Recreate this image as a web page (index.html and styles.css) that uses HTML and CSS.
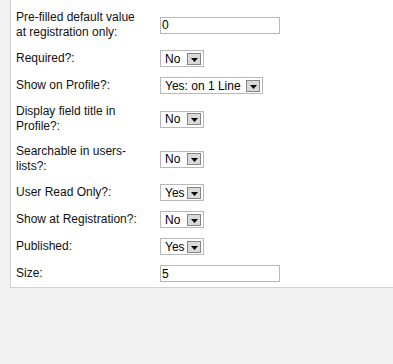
FILE: index.html
```html
<!DOCTYPE html>
<html lang="en">
<head>
<meta charset="UTF-8">
<title>Field Parameters</title>
<link rel="stylesheet" href="styles.css">
</head>
<body>
<div class="panel">
<table class="params">
<tr>
<td class="lbl">Pre-filled default value at registration only:</td>
<td><input type="text" class="txt" value="0"></td>
</tr>
<tr>
<td class="lbl">Required?:</td>
<td><span class="pick sm"><select><option>No</option><option>Yes</option></select><i class="drop"><svg width="7" height="4" viewBox="0 0 7 4"><path d="M0 0h7L3.5 4z" fill="#000"/></svg></i></span></td>
</tr>
<tr>
<td class="lbl">Show on Profile?:</td>
<td><span class="pick lg"><select><option>Yes: on 1 Line</option><option>Yes: on 2 Lines</option><option>No</option></select><i class="drop"><svg width="7" height="4" viewBox="0 0 7 4"><path d="M0 0h7L3.5 4z" fill="#000"/></svg></i></span></td>
</tr>
<tr>
<td class="lbl">Display field title in Profile?:</td>
<td><span class="pick sm"><select><option>No</option><option>Yes</option></select><i class="drop"><svg width="7" height="4" viewBox="0 0 7 4"><path d="M0 0h7L3.5 4z" fill="#000"/></svg></i></span></td>
</tr>
<tr>
<td class="lbl">Searchable in users-lists?:</td>
<td><span class="pick sm"><select><option>No</option><option>Yes</option></select><i class="drop"><svg width="7" height="4" viewBox="0 0 7 4"><path d="M0 0h7L3.5 4z" fill="#000"/></svg></i></span></td>
</tr>
<tr>
<td class="lbl">User Read Only?:</td>
<td><span class="pick sm"><select><option>Yes</option><option>No</option></select><i class="drop"><svg width="7" height="4" viewBox="0 0 7 4"><path d="M0 0h7L3.5 4z" fill="#000"/></svg></i></span></td>
</tr>
<tr>
<td class="lbl">Show at Registration?:</td>
<td><span class="pick sm"><select><option>No</option><option>Yes</option></select><i class="drop"><svg width="7" height="4" viewBox="0 0 7 4"><path d="M0 0h7L3.5 4z" fill="#000"/></svg></i></span></td>
</tr>
<tr>
<td class="lbl">Published:</td>
<td><span class="pick sm"><select><option>Yes</option><option>No</option></select><i class="drop"><svg width="7" height="4" viewBox="0 0 7 4"><path d="M0 0h7L3.5 4z" fill="#000"/></svg></i></span></td>
</tr>
<tr>
<td class="lbl">Size:</td>
<td><input type="text" class="txt" value="5"></td>
</tr>
</table>
</div>
</body>
</html>
```
FILE: styles.css
```css
html, body { margin: 0; padding: 0; background: #f2f2f2; }
body { font-family: 'Liberation Sans', Arial, sans-serif; font-size: 12px; color: #111; }
.panel { margin-left: 10px; padding-top: 5px; background: #fff; border-left: 1px solid #d0d0d0; border-bottom: 1px solid #d0d0d0; }
.params { border-collapse: collapse; border-spacing: 0; margin-left: 5px; }
.params td { padding: 5px 0; vertical-align: middle; line-height: 15px; }
.params td.lbl { width: 125px; padding-right: 19px; }
.txt { box-sizing: border-box; width: 120px; height: 17px; border: 1px solid #b8b8b8; padding: 0 1px; margin: 0; font-family: 'Liberation Sans', Arial, sans-serif; font-size: 12px; color: #000; display: block; }
.pick { display: flex; align-items: center; width: max-content; height: 17px; box-sizing: border-box; border: 1px solid #b8b8b8; background: #fff; }
.pick select { appearance: none; -webkit-appearance: none; border: 0; margin: 0; padding: 0 0 0 4px; height: 15px; background: transparent; font-family: 'Liberation Sans', Arial, sans-serif; font-size: 12px; color: #000; outline: none; }
.pick.sm select { width: 26px; }
.pick.lg select { width: 85px; }
.drop { display: flex; align-items: flex-end; justify-content: center; box-sizing: border-box; width: 14px; height: 12px; margin-right: 2px; padding-bottom: 2px; border: 1px solid #858585; background: #d9d9d9; }
.drop svg { display: block; }
```
